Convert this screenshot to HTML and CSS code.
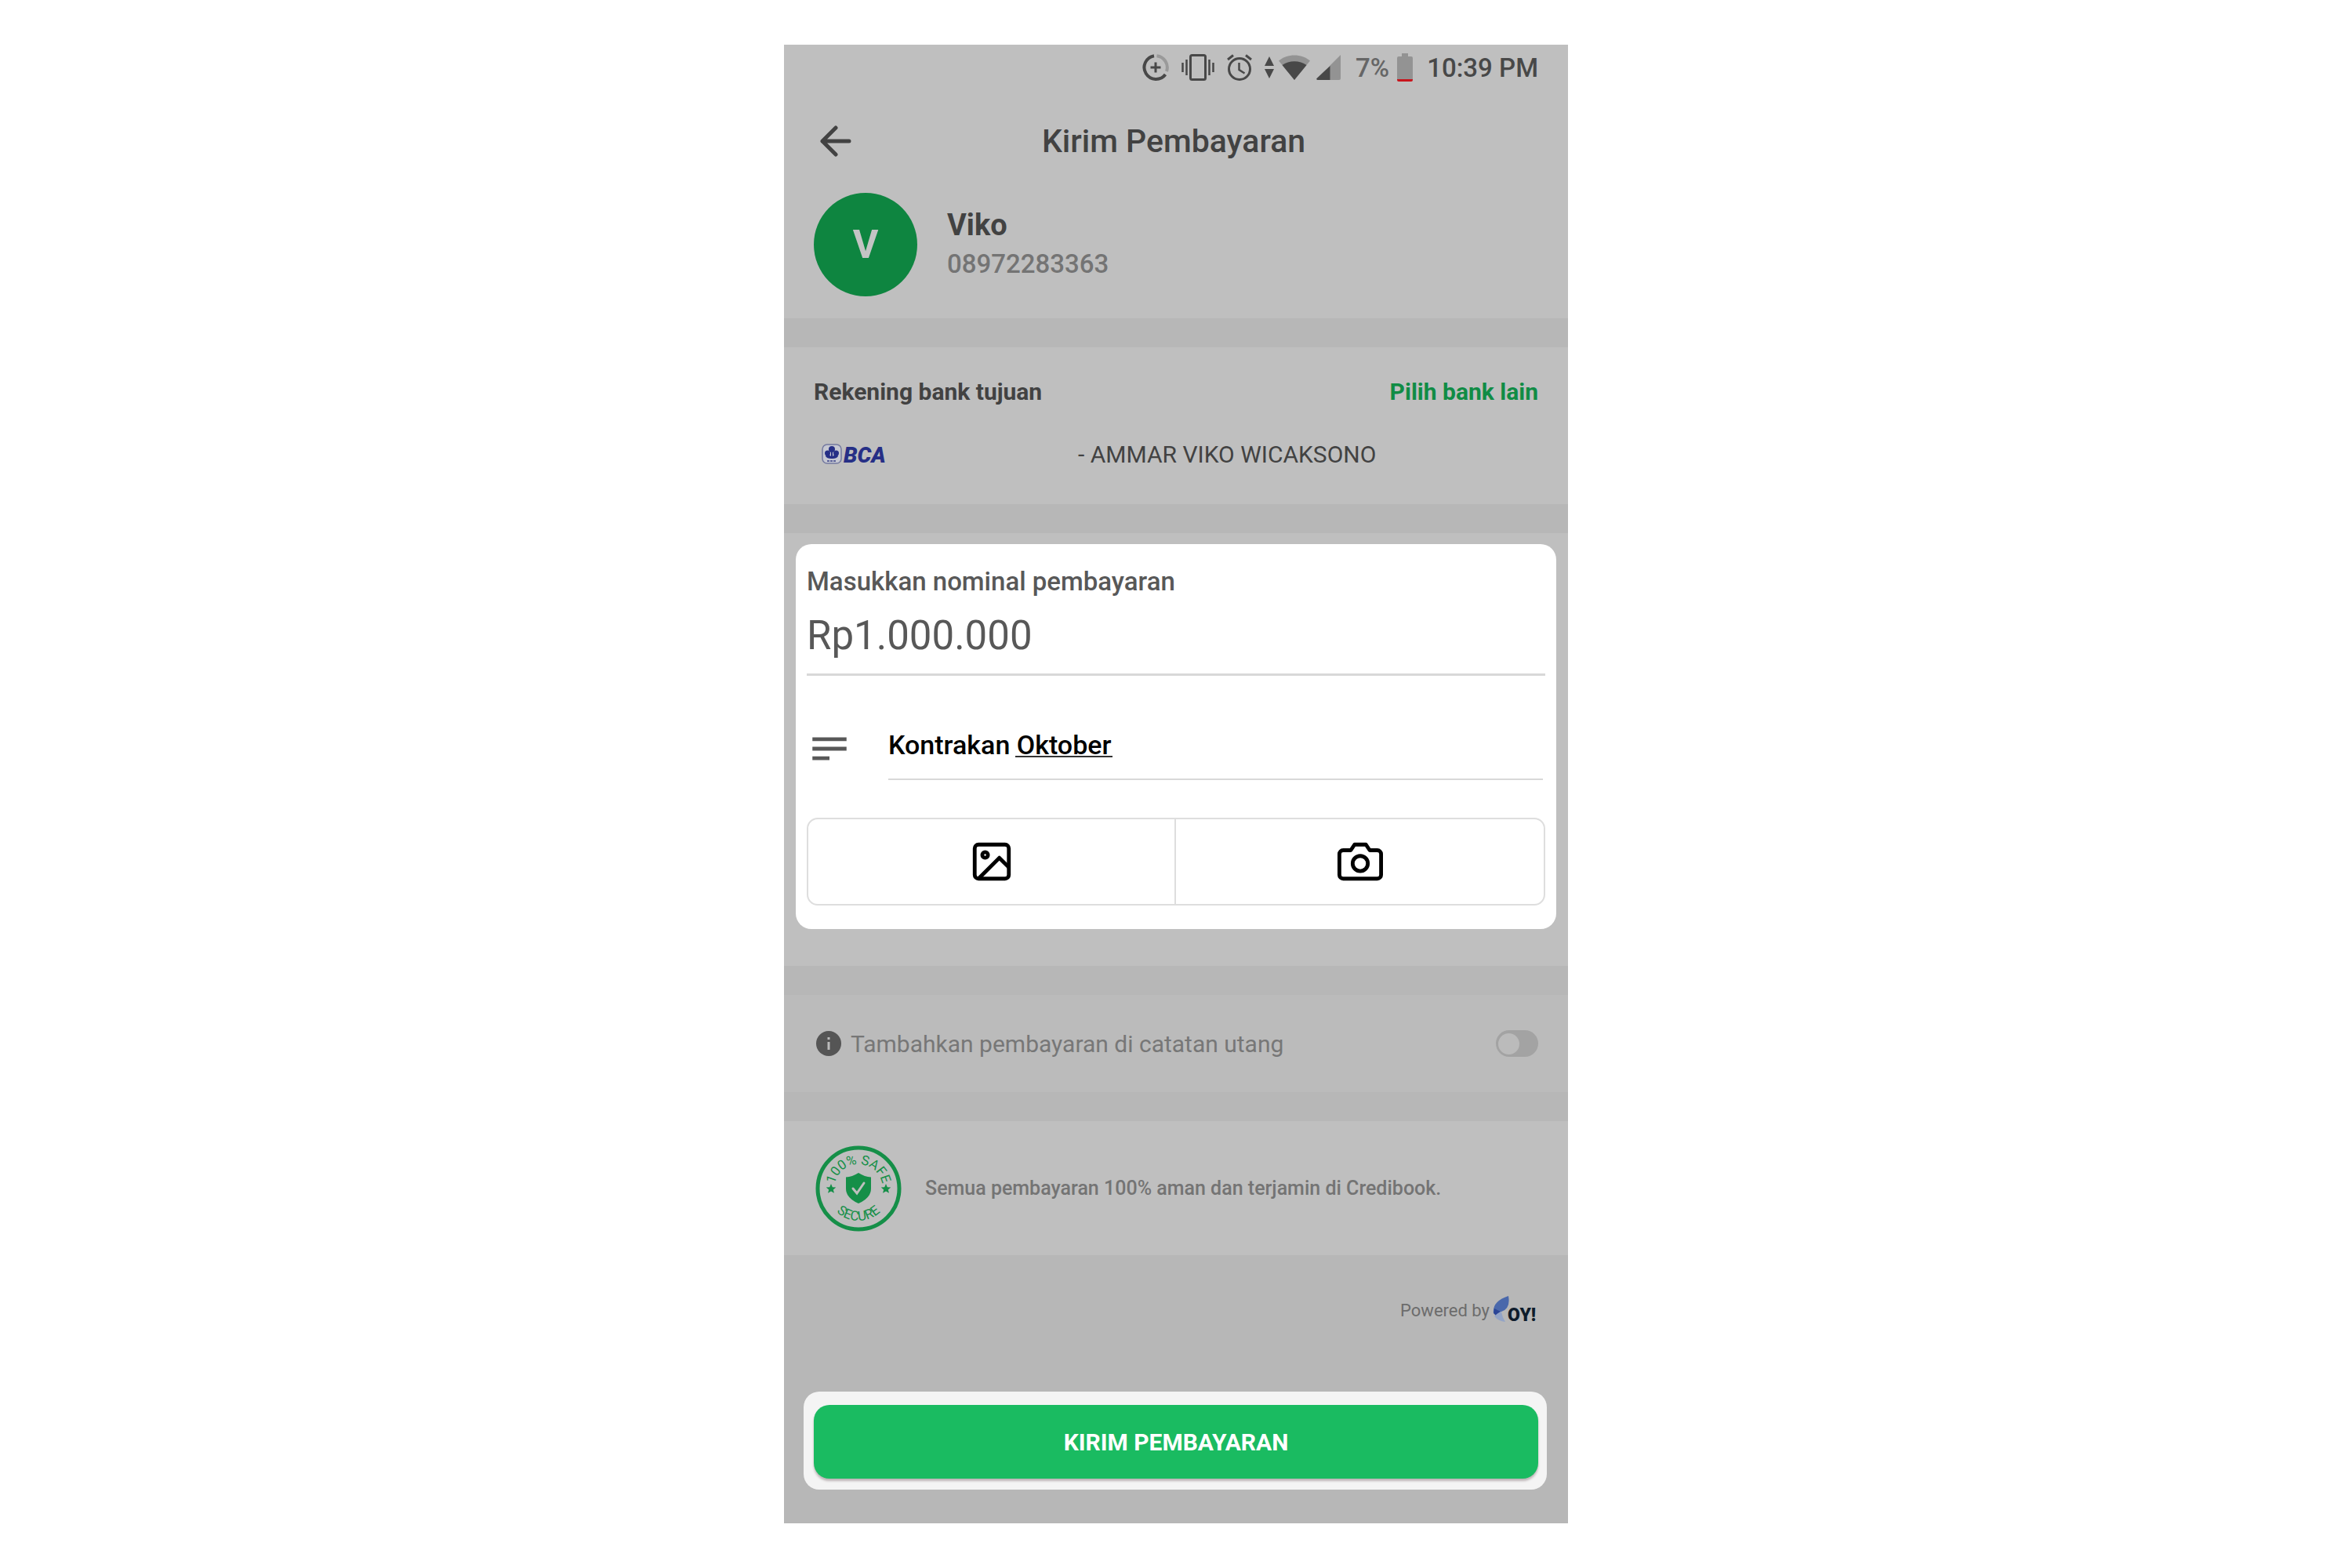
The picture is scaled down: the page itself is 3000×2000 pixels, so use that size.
FILE: index.html
```html
<!DOCTYPE html>
<html lang="id">
  <head>
    <meta charset="utf-8" />
    <title>Kirim Pembayaran</title>
    <link rel="stylesheet" href="styles.css">
  </head>

  <body>
    <div class="phone">
      <div class="status">
        <svg class="ic-saver" width="34" height="34" viewBox="0 0 34 34" fill="none" stroke="#484848" stroke-width="4">
          <path d="M15 2.2A15 15 0 1 0 29.5 26" />
          <path d="M18.5 2.2A15 15 0 0 1 31 22" stroke="#9a9a9a" />
          <path d="M17 10.5v13M10.5 17h13" stroke-width="3" />
        </svg>
        <svg class="ic-vibrate" width="42" height="36" viewBox="0 0 42 36" fill="none" stroke="#484848">
          <rect x="11.5" y="2.5" width="19" height="31" rx="2" stroke-width="3" />
          <path d="M6.5 8v20M35.5 8v20" stroke-width="2.5" />
          <path d="M1.5 12v12M40.5 12v12" stroke-width="2.5" />
        </svg>
        <svg class="ic-alarm" width="32" height="36" viewBox="0 0 32 36" fill="none" stroke="#484848" stroke-width="3">
          <circle cx="16" cy="20" r="13.5" />
          <path d="M15.5 12v9l7 4.5" stroke-width="2.5" />
          <path d="M1 8l7-5.5M31 8l-7-5.5" />
        </svg>
        <svg class="ic-data" width="12" height="28" viewBox="0 0 12 28" fill="#484848">
          <path d="M6 0l6 12H0zM6 28l6-12H0z" />
        </svg>
        <svg class="ic-wifi" width="40" height="34" viewBox="0 0 40 34">
          <path d="M20 33L0 8.5C11-1 29-1 40 8.5z" fill="#939393" />
          <path d="M20 33L4.5 14C13 7.5 27 7.5 35.5 14z" fill="#484848" />
        </svg>
        <svg class="ic-signal" width="31" height="32" viewBox="0 0 31 32">
          <path d="M31 0v30a2 2 0 0 1-2 2H17V14z" fill="#939393" />
          <path d="M17.5 14v18H1.5Q-1 31 1 29.5z" fill="#484848" />
        </svg>
        <span class="percent">7%</span>
        <svg class="ic-battery" width="20" height="36" viewBox="0 0 20 36">
          <path d="M6 0h8v4h4a2 2 0 0 1 2 2v27H0V6a2 2 0 0 1 2-2h4z" fill="#939393" />
          <path d="M0 33h20v1a2 2 0 0 1-2 2H2a2 2 0 0 1-2-2z" fill="#c8141c" />
        </svg>
        <span class="time">10:39 PM</span>
      </div>

      <header class="header">
        <button class="back" aria-label="Kembali">
          <svg width="40" height="40" viewBox="0 0 40 40" fill="none" stroke="#424242" stroke-width="5" stroke-linecap="round" stroke-linejoin="round">
            <path d="M37 20H3M20 3L3 20l17 17" />
          </svg>
        </button>
        <h1>Kirim Pembayaran</h1>
      </header>

      <section class="contact">
        <div class="avatar">V</div>
        <div>
          <div class="name">Viko</div>
          <div class="number">08972283363</div>
        </div>
      </section>

      <section class="bank">
        <div class="bank-head">
          <h2>Rekening bank tujuan</h2>
          <a href="#">Pilih bank lain</a>
        </div>
        <div class="bank-row">
          <svg class="bca" width="88" height="34" viewBox="0 0 88 34">
            <rect x="1" y="4" width="24" height="24" rx="6" fill="#c6c8d2" stroke="#7479a0" stroke-width="1.5" />
            <g fill="#262f86">
              <circle cx="13" cy="10" r="4" />
              <circle cx="7.5" cy="15" r="3.5" />
              <circle cx="18.5" cy="15" r="3.5" />
              <path d="M12 12h2v7l5-4 2 4q-2 3-7 3h-2q-5 0-7-3l2-4 5 4z" />
            </g>
            <path d="M7 25h12" stroke="#5c629a" stroke-width="2" stroke-dasharray="3 1" />
            <text class="bca-text" x="28" y="27">BCA</text>
          </svg>
          <span class="owner">- AMMAR VIKO WICAKSONO</span>
        </div>
      </section>

      <section class="payment">
        <div class="card">
          <label for="amount">Masukkan nominal pembayaran</label>
          <input class="amount" id="amount" type="text" value="Rp1.000.000" />
          <div class="note">
            <svg width="58" height="58" viewBox="0 0 24 24" fill="#585858">
              <path d="M3 6h18v2H3zM3 11h18v2H3zM3 16h9v2H3z" />
            </svg>
            <div class="note-box">
              <input id="note" type="text" value="Kontrakan Oktober" aria-label="Catatan" spellcheck="false" />
              <span class="typing"></span>
            </div>
          </div>
          <div class="attach">
            <button aria-label="Galeri">
              <svg width="58" height="58" viewBox="0 0 24 24" fill="none" stroke="#000" stroke-width="2" stroke-linejoin="round">
                <rect x="3" y="3" width="18" height="18" rx="2" />
                <circle cx="8.5" cy="8.5" r="1.5" />
                <path d="M21 15l-5-5L5 21" />
              </svg>
            </button>
            <button aria-label="Kamera">
              <svg width="58" height="58" viewBox="0 0 24 24" fill="none" stroke="#000" stroke-width="2" stroke-linejoin="round">
                <path d="M23 19a2 2 0 0 1-2 2H3a2 2 0 0 1-2-2V8a2 2 0 0 1 2-2h4l2-3h6l2 3h4a2 2 0 0 1 2 2z" />
                <circle cx="12" cy="13" r="4" />
              </svg>
            </button>
          </div>
        </div>
      </section>

      <section class="debt">
        <svg width="32" height="32" viewBox="0 0 32 32">
          <circle cx="16" cy="16" r="16" fill="#555" />
          <path d="M16 14v10M16 8v3" stroke="#bbb" stroke-width="3" />
        </svg>
        <label for="debt">Tambahkan pembayaran di catatan utang</label>
        <input class="switch" id="debt" type="checkbox" />
      </section>

      <section class="safe">
        <svg width="110" height="110" viewBox="0 0 110 110">
          <defs>
            <path id="arc-top" d="M24 55a31 31 0 0 1 62 0" />
            <path id="arc-bottom" d="M14 55a41 41 0 0 0 82 0" />
          </defs>
          <circle cx="55" cy="55" r="52" fill="none" stroke="#158f48" stroke-width="5" />
          <g fill="#158f48">
            <path d="M55 35q8 5 16 5.5V55q0 12-16 19-16-7-16-19V40.5Q47 40 55 35z" />
            <path id="star" d="M20 49l1.8 4.2 4.5.3-3.5 2.9 1.2 4.4-4-2.4-4 2.4 1.2-4.4-3.5-2.9 4.5-.3z" />
            <use href="#star" x="70" />
          </g>
          <path d="M48 55l5 6 9-13" fill="none" stroke="#bfbfbf" stroke-width="3" stroke-linecap="round" />
          <text class="badge-text"><textPath href="#arc-top" startOffset="50%">100% SAFE</textPath></text>
          <text class="badge-text"><textPath href="#arc-bottom" startOffset="50%">SECURE</textPath></text>
        </svg>
        <p>Semua pembayaran 100% aman dan terjamin di Credibook.</p>
      </section>

      <footer class="footer">
        <div class="powered">
          <span>Powered by</span>
          <svg width="62" height="42" viewBox="0 -3 62 42">
            <path d="M1 22Q-1 7 20 0q3 16-9 20Q5 21 1 22z" fill="#4a68ab" />
            <path d="M1 22l1-6 8 4-6 5z" fill="#2b4596" />
            <path d="M2 26q5-5 9-6 1 7 5 13Q7 32 2 26z" fill="#93a4c6" />
            <text class="oy-text" x="19" y="32">OY!</text>
          </svg>
        </div>
        <div class="submit">
          <button>KIRIM PEMBAYARAN</button>
        </div>
      </footer>
    </div>
  </body>
</html>
```

FILE: styles.css
```css
* {
  box-sizing: border-box;
}

body {
  margin: 0;
  background-color: #fff;
  font-family: Roboto, "Liberation Sans", sans-serif;
  font-weight: 500;
  color: #424242;
}

button,
input {
  font: inherit;
  color: inherit;
  margin: 0;
  padding: 0;
  border: 0;
  background: none;
}

svg {
  display: block;
  flex: none;
}

h1,
h2,
p {
  margin: 0;
}

.phone {
  max-width: 1000px;
  margin: 57px auto;
  background-color: #bfbfbf;
}

/* status bar */
.status {
  display: flex;
  align-items: center;
  justify-content: flex-end;
  height: 58px;
  padding: 0 38px;
  font-size: 33px;
  color: #484848;
}

.ic-vibrate {
  margin-left: 16px;
}

.ic-alarm {
  margin-left: 16px;
}

.ic-data {
  margin-left: 16px;
}

.ic-wifi {
  margin-left: 6px;
}

.ic-signal {
  margin-left: 8px;
}

.percent {
  margin-left: 19px;
  color: #666;
}

.ic-battery {
  margin-left: 10px;
}

.time {
  margin-left: 18px;
}

/* title and contact */
.header {
  display: grid;
  grid-template-columns: 40px 1fr 40px;
  align-items: center;
  height: 130px;
  padding: 0 52px 0 46px;
}

.back {
  width: 40px;
  height: 40px;
}

.header h1 {
  font-size: 41px;
  font-weight: 500;
  text-align: center;
}

.contact {
  display: flex;
  align-items: center;
  gap: 38px;
  padding: 1px 38px 28px;
}

.avatar {
  display: flex;
  align-items: center;
  justify-content: center;
  width: 132px;
  height: 132px;
  border-radius: 50%;
  background-color: #0e8540;
  color: #c4c4c4;
  font-size: 50px;
  font-weight: 700;
}

.name {
  font-size: 38px;
  font-weight: 700;
  line-height: 50px;
}

.number {
  font-size: 33px;
  line-height: 50px;
  color: #747474;
}

/* bank account */
.bank {
  height: 274px;
  padding: 40px 38px 0;
  border-top: 37px solid #b7b7b7;
  border-bottom: 37px solid #b7b7b7;
}

.bank-head {
  display: flex;
  justify-content: space-between;
  font-size: 30px;
  line-height: 34px;
}

.bank-head h2 {
  font-size: 30px;
  font-weight: 700;
}

.bank-head a {
  color: #108c45;
  font-weight: 700;
  text-decoration: none;
}

.bank-row {
  display: flex;
  align-items: center;
  gap: 239px;
  margin-top: 46px;
  padding-left: 10px;
  font-size: 30px;
  line-height: 34px;
}

.bca-text {
  font-size: 28px;
  font-weight: 900;
  font-style: italic;
  fill: #262f86;
}

.owner {
  font-weight: 400;
}

/* highlighted form */
.payment {
  padding: 14px 15px 47px;
  border-bottom: 37px solid #b7b7b7;
}

.card {
  padding: 28px 14px 30px;
  border-radius: 20px;
  background-color: #fff;
  color: #585858;
}

.card label {
  display: block;
  font-size: 33px;
  line-height: 40px;
}

.amount {
  display: block;
  width: 100%;
  height: 100px;
  border-bottom: 3px solid #d8d8d8;
  font-size: 51px;
  font-weight: 400;
}

.note {
  display: flex;
  align-items: center;
  gap: 46px;
  padding: 53px 3px 48px 0;
}

.note-box {
  position: relative;
  flex: 1;
}

.note-box input {
  width: 100%;
  height: 80px;
  padding-bottom: 8px;
  border-bottom: 2px solid #d8d8d8;
  font-size: 34px;
  color: #000;
}

/* line under the word that is being typed */
.typing {
  position: absolute;
  top: 49px;
  left: 162px;
  width: 124px;
  height: 2px;
  background-color: #333;
}

.attach {
  display: grid;
  grid-template-columns: 1fr 1fr;
  height: 112px;
  border: 2px solid #dedede;
  border-radius: 14px;
}

.attach button {
  display: flex;
  align-items: center;
  justify-content: center;
}

.attach button:first-child {
  border-right: 2px solid #dedede;
}

/* debt switch */
.debt {
  display: flex;
  align-items: center;
  gap: 12px;
  height: 161px;
  padding: 0 38px 0 41px;
  border-bottom: 37px solid #b7b7b7;
  background-color: #bbb;
  font-size: 30px;
  font-weight: 400;
  color: #777;
}

.debt label {
  flex: 1;
}

.switch {
  display: flex;
  align-items: center;
  appearance: none;
  width: 54px;
  height: 34px;
  padding: 3px;
  border-radius: 17px;
  background-color: #a3a3a3;
}

.switch::before {
  content: "";
  width: 27px;
  height: 27px;
  border-radius: 50%;
  background-color: #bbb;
}

.switch:checked {
  justify-content: flex-end;
  background-color: #108c45;
}

.safe {
  display: flex;
  align-items: center;
  gap: 30px;
  height: 171px;
  padding: 0 40px;
  font-size: 25px;
  color: #747474;
}

.badge-text {
  font-size: 17px;
  font-weight: 400;
  text-anchor: middle;
  fill: #158f48;
}

/* footer */
.footer {
  padding: 49px 27px 43px 25px;
  background-color: #b7b7b7;
}

.powered {
  display: flex;
  align-items: center;
  justify-content: flex-end;
  gap: 4px;
  padding-right: 7px;
  font-size: 22px;
  font-weight: 400;
  color: #6c6c6c;
}

.oy-text {
  font-size: 23px;
  font-weight: 900;
  fill: #0e1c2b;
}

.submit {
  margin-top: 83px;
  padding: 17px 11px 14px 13px;
  border-radius: 20px;
  background-color: #f4f4f4;
}

.submit button {
  width: 100%;
  height: 94px;
  border-radius: 20px;
  background-color: #1abb61;
  box-shadow: 0 3px 3px #bdb4b6;
  color: #fff;
  font-size: 30px;
  font-weight: 700;
}
```
